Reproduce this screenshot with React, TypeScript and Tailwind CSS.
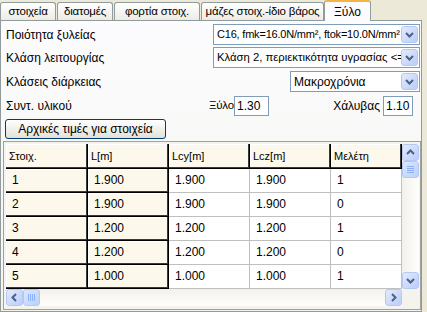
import React from 'react';

const tabs = [
  { label: 'στοιχεία', w: 'w-[56px]' },
  { label: 'διατομές', w: 'w-[56px] ml-[1px]' },
  { label: 'φορτία στοιχ.', w: 'w-[86px] ml-[1px]' },
  { label: 'μάζες στοιχ.-ίδιο βάρος', w: 'w-[123px] ml-[1px]' },
];

const columns = [
  { title: 'Στοιχ.', w: 'w-[82px]' },
  { title: 'L[m]', w: 'w-[81px]' },
  { title: 'Lcy[m]', w: 'w-[81px]' },
  { title: 'Lcz[m]', w: 'w-[81px]' },
  { title: 'Μελέτη', w: 'flex-1' },
];

const rows = [
  ['1', '1.900', '1.900', '1.900', '1'],
  ['2', '1.900', '1.900', '1.900', '0'],
  ['3', '1.200', '1.200', '1.200', '1'],
  ['4', '1.200', '1.200', '1.200', '0'],
  ['5', '1.000', '1.000', '1.000', '1'],
];

const fixedCell =
  'bg-[#fcf8ec] shadow-[inset_-1px_-1px_0_#000,inset_-2px_-2px_0_#3a3a3a,inset_1px_1px_0_#fff]';
const plainCell = 'bg-white shadow-[inset_-1px_-1px_0_#c0c0c0]';

function Arrow({ dir }: { dir: 'up' | 'down' | 'left' | 'right' }) {
  const pts = {
    up: '5,10 8.5,6.5 12,10',
    down: '5,7 8.5,10.5 12,7',
    left: '10,5 6.5,8.5 10,12',
    right: '7,5 10.5,8.5 7,12',
  }[dir];
  return (
    <svg width="17" height="17" viewBox="0 0 17 17" className="absolute left-[-1px] top-[-1px]">
      <polyline points={pts} fill="none" stroke="#4d6185" strokeWidth="2" />
    </svg>
  );
}

function ScrollBtn({ dir }: { dir: 'up' | 'down' | 'left' | 'right' }) {
  return (
    <div className="relative h-[17px] w-[17px] shrink-0 rounded-[3px] border border-[#b4c8f6] bg-gradient-to-br from-[#e3ebfe] to-[#b9cdf9]">
      <Arrow dir={dir} />
    </div>
  );
}

function Thumb({ vertical }: { vertical: boolean }) {
  return (
    <div
      className={`flex h-[17px] w-[17px] shrink-0 items-center justify-center gap-[1px] rounded-[3px] border border-[#b4c8f6] bg-gradient-to-br from-[#dde7fd] to-[#bcd0f9] ${
        vertical ? 'flex-col' : 'flex-row'
      }`}
    >
      {[0, 1, 2, 3].map((i) => (
        <div
          key={i}
          className={vertical ? 'h-[1px] w-[7px] bg-[#8cb0f8]' : 'h-[7px] w-[1px] bg-[#8cb0f8]'}
        />
      ))}
    </div>
  );
}

function Combo({ text, w, size }: { text: string; w: string; size: string }) {
  return (
    <div className={`flex h-[21px] ${w} items-center border border-[#7f9db9] bg-white`}>
      <span className={`flex-1 overflow-hidden whitespace-nowrap pl-[3px] ${size}`}>{text}</span>
      <div className="mr-[1px]">
        <ScrollBtn dir="down" />
      </div>
    </div>
  );
}

function Input({ value, w }: { value: string; w: string }) {
  return (
    <div className={`flex h-[20px] ${w} shrink-0 items-center border border-[#7f9db9] bg-white pl-[2px] text-[12px]`}>
      {value}
    </div>
  );
}

export default function App() {
  return (
    <div className="h-[312px] w-[427px] overflow-hidden bg-[#ece9d8] font-['Liberation_Sans',Arial,sans-serif] text-[12px] text-black">
      {/* tab strip */}
      <div className="flex h-[20px] items-end">
        {tabs.map((t) => (
          <div
            key={t.label}
            className={`${t.w} flex h-[18px] items-center justify-center whitespace-nowrap rounded-t-[3px] border border-b-0 border-[#919b9c] bg-gradient-to-b from-white to-[#ecebe5] text-[11.5px] tracking-[-0.2px]`}
          >
            {t.label}
          </div>
        ))}
        <div className="relative z-10 -mb-[1px] flex h-[21px] w-[47px] items-center justify-center rounded-t-[3px] border-x border-t-2 border-[#919b9c] border-t-[#f5b343] bg-[#fcfcfe]">
          Ξύλο
        </div>
      </div>

      {/* tab page */}
      <div className="flex h-[292px] w-[422px] flex-col border border-[#919b9c] bg-gradient-to-b from-[#fcfcfe] to-[#f4f3ee]">
        <div className="mt-[3px] flex h-[21px] items-center">
          <span className="w-[212px] pl-[5px]">Ποιότητα ξυλείας</span>
          <Combo text="C16, fmk=16.0N/mm², ftok=10.0N/mm²" w="w-[207px]" size="text-[11px] tracking-[-0.2px]" />
        </div>
        <div className="mt-[2px] flex h-[21px] items-center">
          <span className="w-[212px] pl-[5px]">Κλάση λειτουργίας</span>
          <Combo text="Κλάση 2, περιεκτικότητα υγρασίας <=20%" w="w-[207px]" size="text-[11.3px]" />
        </div>
        <div className="mt-[3px] flex h-[21px] items-center">
          <span className="w-[289px] pl-[5px]">Κλάσεις διάρκειας</span>
          <Combo text="Μακροχρόνια" w="w-[130px]" size="text-[12px]" />
        </div>
        <div className="mt-[4px] flex h-[20px] items-center">
          <span className="w-[208px] pl-[5px]">Συντ. υλικού</span>
          <span className="w-[25px] whitespace-nowrap text-[11.5px] tracking-[-0.2px]">Ξύλο</span>
          <Input value="1.30" w="w-[35px]" />
          <span className="flex-1 pr-[3px] text-right">Χάλυβας</span>
          <Input value="1.10" w="w-[30px]" />
          <div className="w-[8px]" />
        </div>
        <button className="ml-[4px] mt-[3px] flex h-[20px] w-[161px] items-center justify-center rounded-[3px] border border-[#003c74] bg-gradient-to-b from-white to-[#e3e1d6]">
          Αρχικές τιμές για στοιχεία
        </button>

        {/* grid */}
        <div className="ml-[2px] mt-[2px] flex h-[169px] w-[418px] flex-col border border-[#a0a0a0] bg-[#f4f3ee] p-[2px] pr-[1px]">
          <div className="flex h-[145px]">
            <div className="flex flex-1 flex-col overflow-hidden">
              <div className="flex h-[25px] shrink-0">
                {columns.map((c) => (
                  <div
                    key={c.title}
                    className={`${c.w} ${fixedCell} flex items-center overflow-hidden whitespace-nowrap pl-[3px] text-[11px]`}
                  >
                    {c.title}
                  </div>
                ))}
              </div>
              {rows.map((r) => (
                <div key={r[0]} className="flex h-[24px] shrink-0">
                  {r.map((v, i) => (
                    <div
                      key={i}
                      className={`${columns[i].w} ${i < 2 ? fixedCell : plainCell} flex items-center overflow-hidden pb-[2px] pl-[6px] text-[12px]`}
                    >
                      {v}
                    </div>
                  ))}
                </div>
              ))}
            </div>
            <div className="flex w-[17px] flex-col bg-gradient-to-r from-[#f3f1ec] to-[#fefefb]">
              <ScrollBtn dir="up" />
              <Thumb vertical />
              <div className="flex-1" />
              <ScrollBtn dir="down" />
            </div>
          </div>
          <div className="flex h-[17px]">
            <div className="flex flex-1 bg-gradient-to-b from-[#f3f1ec] to-[#fefefb]">
              <ScrollBtn dir="left" />
              <Thumb vertical={false} />
              <div className="flex-1" />
              <ScrollBtn dir="right" />
            </div>
            <div className="w-[17px] bg-[#f4f3ee]" />
          </div>
        </div>
      </div>
    </div>
  );
}
